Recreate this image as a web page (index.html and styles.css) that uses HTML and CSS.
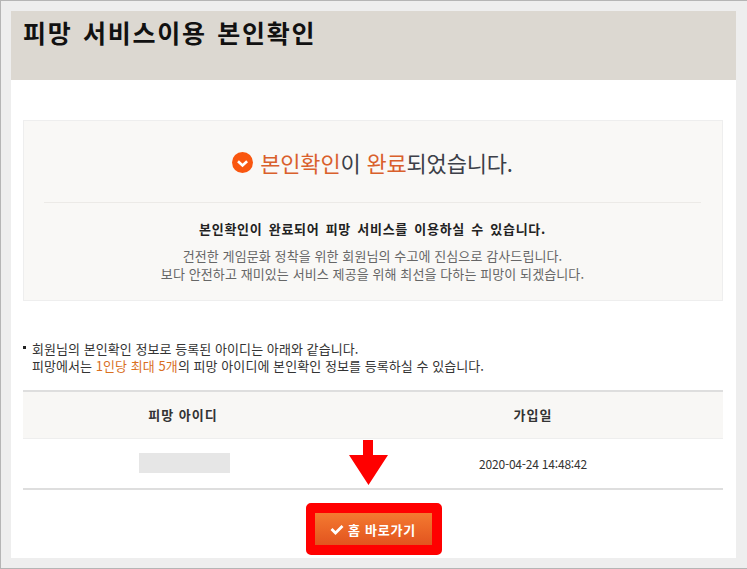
FILE: index.html
```html
<!DOCTYPE html>
<html lang="ko">
<head>
<meta charset="utf-8">
<title>피망 서비스이용 본인확인</title>
<link rel="stylesheet" href="styles.css">
</head>
<body>
<div class="frame">
  <main class="panel">
    <header class="head"><h1 class="title">피망 서비스이용 본인확인</h1></header>
    <div class="content">
      <section class="box">
        <h2 class="done">
          <svg class="done-icon" viewBox="0 0 21 21" width="21" height="21" aria-hidden="true"><circle cx="10.5" cy="10.5" r="10.5" fill="#f9560f"/><path d="M6 9.2l4.5 4.3 4.6-4.3" fill="none" stroke="#fff" stroke-width="2.6"/></svg>
          <span><em class="hl">본인확인</em>이 <em class="hl">완료</em>되었습니다.</span>
        </h2>
        <hr class="sep">
        <p class="lead">본인확인이 완료되어 피망 서비스를 이용하실 수 있습니다.</p>
        <p class="desc">건전한 게임문화 정착을 위한 회원님의 수고에 진심으로 감사드립니다.<br>보다 안전하고 재미있는 서비스 제공을 위해 최선을 다하는 피망이 되겠습니다.</p>
      </section>
      <p class="note">회원님의 본인확인 정보로 등록된 아이디는 아래와 같습니다.<br>피망에서는 <span class="orange">1인당 최대 5개</span>의 피망 아이디에 본인확인 정보를 등록하실 수 있습니다.</p>
      <table class="ids">
        <thead><tr><th class="col-id">피망 아이디</th><th>가입일</th></tr></thead>
        <tbody><tr><td><span class="mask"></span></td><td class="date">2020-04-24 14:48:42</td></tr></tbody>
      </table>
      <div class="actions">
        <a class="home" href="#"><svg viewBox="0 0 14 11" width="14" height="11" aria-hidden="true"><path d="M1.5 5l4 4 7-7" fill="none" stroke="#fff" stroke-width="2.8"/></svg>홈 바로가기</a>
      </div>
      <svg class="arrow" viewBox="0 0 39 45" width="39" height="45" aria-hidden="true"><path d="M14 0h10v15h15L19.5 45 0 15h14z" fill="#f00"/></svg>
    </div>
  </main>
</div>
</body>
</html>
```
FILE: styles.css
```css
* { box-sizing: border-box; }
html, body { margin: 0; height: 100%; }
body { font-family: "Noto Sans CJK KR", "Noto Sans", sans-serif; color: #333; background: #eee; }
.frame { height: 569px; padding: 10px 11px 10px 10px; border-top: 1px solid #b5b5b5; border-left: 1px solid #b5b5b5; border-bottom: 1px solid #b5b5b5; overflow: hidden; }
.panel { background: #fff; height: 547px; }
.head { height: 69px; background: #dcd8d1; padding: 4px 0 0 12px; }
.title { margin: 0; font-size: 25px; line-height: 35px; font-weight: 700; color: #111; letter-spacing: 1.7px; word-spacing: 2px; }
.content { position: relative; padding: 40px 13px 0 12px; }
.box { height: 181px; background: #f9f8f6; border: 1px solid #eee; padding: 26px 21px 0 20px; text-align: center; }
.done { margin: 0; height: 30px; display: flex; justify-content: center; align-items: center; gap: 7px; font-size: 22px; line-height: 30px; font-weight: 400; color: #3c3f48; letter-spacing: -.2px; }
.hl { font-style: normal; color: #d9602c; }
.sep { margin: 25px 0 0; border: 0; border-top: 1px solid #eceae7; }
.lead { margin: 17px 0 0; font-size: 13px; line-height: 18px; font-weight: 700; color: #222; letter-spacing: .7px; word-spacing: 2px; }
.desc { margin: 9px 0 0; font-size: 13px; line-height: 18px; color: #666; letter-spacing: .1px; }
.note { position: relative; margin: 39px 0 0; padding-left: 9px; font-size: 13px; line-height: 17px; color: #333; letter-spacing: .06px; }
.note::before { content: ""; position: absolute; left: 0; top: 6px; width: 3px; height: 3px; background: #222; }
.orange { color: #d9701f; }
.ids { width: 100%; margin-top: 16px; border-collapse: collapse; table-layout: fixed; border-top: 2px solid #dedede; border-bottom: 2px solid #dedede; font-size: 13px; }
.col-id { width: 320px; }
.ids th { height: 47px; background: #f8f7f5; border-bottom: 1px solid #eee; font-weight: 700; color: #333; letter-spacing: 1px; }
.ids td { height: 51px; text-align: center; color: #333; padding: 0; }
.ids .date { font-size: 12px; letter-spacing: -.2px; }
.mask { display: block; width: 91px; height: 20px; margin-left: 116px; background: #e6e6e6; }
.actions { display: flex; justify-content: center; margin-top: 13px; padding-left: 1px; }
.home { display: flex; align-items: center; justify-content: center; gap: 4px; width: 136px; height: 52px; border-style: solid; border-color: #f00; border-width: 10px 10px 10px 9px; border-radius: 5px; background: linear-gradient(#f47a30, #e2541f); background-clip: padding-box; color: #fff; font-size: 13px; font-weight: 700; letter-spacing: .8px; text-decoration: none; }
.arrow { position: absolute; left: 338px; top: 360px; }
```
